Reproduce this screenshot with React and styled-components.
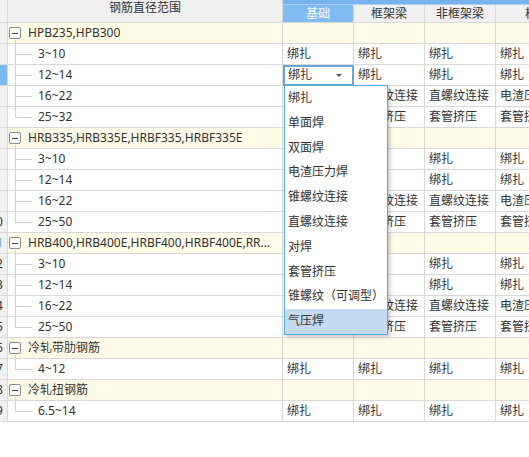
import React from 'react';
import styled, { createGlobalStyle, css } from 'styled-components';

const GlobalStyle = createGlobalStyle`
  html, body { margin: 0; padding: 0; background: #fff; }
  body {
    font-family: "Noto Sans", "Noto Sans CJK SC", sans-serif;
    font-size: 12px;
    color: #333;
  }
`;

const GRID = '#d9d9d9';
const LINE = '#d2d2d2';

const Viewport = styled.div`
  width: 529px;
  height: 457px;
  overflow: hidden;
  background: #fff;
`;

const Table = styled.div`
  position: relative;
  display: flex;
  flex-direction: column;
  width: max-content;
`;

const HeaderRow = styled.div`
  display: flex;
  height: 23px;
`;

const CornerCell = styled.div`
  width: 8px;
  flex-shrink: 0;
  box-sizing: border-box;
  background: #f0f0f0;
  border-right: 1px solid ${GRID};
  border-bottom: 1px solid ${GRID};
`;

const TitleHeader = styled.div`
  width: 275px;
  flex-shrink: 0;
  box-sizing: border-box;
  background: #f0f0f0;
  border-right: 1px solid ${GRID};
  border-bottom: 1px solid ${GRID};
  text-align: center;
  line-height: 15px;
  color: #333;
`;

const GroupHeader = styled.div`
  display: flex;
  flex-direction: column;
`;

const GroupBar = styled.div`
  height: 5px;
  box-sizing: border-box;
  background: #77b3ee;
  border-bottom: 1px solid #a9cff4;
`;

const SubHeaderRow = styled.div`
  display: flex;
  height: 18px;
`;

const SubHeader = styled.div`
  width: 71px;
  flex-shrink: 0;
  box-sizing: border-box;
  border-right: 1px solid ${GRID};
  border-bottom: 1px solid ${GRID};
  background: ${(p) => (p.$active ? '#80bbf2' : '#f0f0f0')};
  color: ${(p) => (p.$active ? '#fff' : '#333')};
  text-align: center;
  line-height: 17px;
  white-space: nowrap;
`;

const Row = styled.div`
  display: flex;
  height: 21px;
  background: ${(p) => (p.$group ? '#fffbe6' : '#fff')};
`;

const RowNum = styled.div`
  width: 8px;
  flex-shrink: 0;
  box-sizing: border-box;
  overflow: hidden;
  display: flex;
  justify-content: flex-end;
  background: ${(p) => (p.$selected ? '#7cb8f0' : '#f0f0f0')};
  border-right: 1px solid ${GRID};
  border-bottom: 1px solid ${GRID};
`;

const RowNumText = styled.span`
  width: 22px;
  flex-shrink: 0;
  text-align: center;
  line-height: 20px;
  color: #333;
`;

const NameCell = styled.div`
  position: relative;
  width: 275px;
  flex-shrink: 0;
  box-sizing: border-box;
  display: flex;
  align-items: center;
  padding-left: ${(p) => (p.$group ? '1px' : '30px')};
  padding-right: 6px;
  border-right: 1px solid ${GRID};
  border-bottom: 1px solid ${GRID};
  white-space: nowrap;
  overflow: hidden;

  ${(p) =>
    p.$group &&
    css`
      &::before {
        content: '';
        position: absolute;
        left: 7px;
        top: 17px;
        bottom: -1px;
        width: 1px;
        background: ${LINE};
      }
    `}

  ${(p) =>
    !p.$group &&
    css`
      &::before {
        content: '';
        position: absolute;
        left: 7px;
        top: -1px;
        ${p.$last ? 'height: calc(50% + 1px);' : 'bottom: -1px;'}
        width: 1px;
        background: ${LINE};
      }
      &::after {
        content: '';
        position: absolute;
        left: 7px;
        top: 50%;
        width: 17px;
        height: 1px;
        background: ${LINE};
      }
    `}
`;

const Toggle = styled.span`
  position: relative;
  width: 12px;
  height: 12px;
  flex-shrink: 0;
  box-sizing: border-box;
  border: 1px solid #8c8c8c;
  border-radius: 2px;
  background: #fff;
  margin-right: 7px;
  display: flex;
  align-items: center;
  justify-content: center;
  z-index: 1;

  &::after {
    content: '';
    width: 6px;
    height: 1px;
    background: #444;
  }
`;

const Label = styled.span`
  min-width: 0;
  overflow: hidden;
  text-overflow: ellipsis;
  line-height: 20px;
`;

const DataCell = styled.div`
  width: 71px;
  flex-shrink: 0;
  box-sizing: border-box;
  display: flex;
  align-items: center;
  justify-content: space-between;
  padding-left: 4px;
  border-right: 1px solid ${GRID};
  border-bottom: 1px solid ${GRID};
  line-height: 20px;
  white-space: nowrap;
  overflow: hidden;

  ${(p) =>
    p.$editing &&
    css`
      outline: 2px solid #6ba5dd;
      outline-offset: -2px;
      padding-left: 5px;
      padding-right: 11px;
      background: #fff;
    `}
`;

const Caret = styled.span`
  width: 0;
  height: 0;
  border-left: 3px solid transparent;
  border-right: 3px solid transparent;
  border-top: 3px solid #555;
`;

const Dropdown = styled.ul`
  position: absolute;
  top: 85px;
  left: 284px;
  width: 104px;
  height: 250px;
  box-sizing: border-box;
  margin: 0;
  padding: 0;
  list-style: none;
  background: #fff;
  border: 1px solid #55aadc;
  box-shadow: 2px 2px 4px rgba(0, 0, 0, 0.22);
  z-index: 5;
`;

const Option = styled.li`
  height: 24.8px;
  line-height: 23px;
  padding-left: 3px;
  white-space: nowrap;
  color: #333;
  background: ${(p) => (p.$selected ? '#c4daf1' : 'transparent')};
`;

const BIND = ['绑扎', '绑扎', '绑扎', '绑扎', '绑扎'];
const SCREW = ['直螺纹连接', '直螺纹连接', '直螺纹连接', '电渣压力焊', '电渣压力焊'];
const SLEEVE = ['套管挤压', '套管挤压', '套管挤压', '套管挤压', '套管挤压'];

const rows = [
  { n: 1, group: true, label: 'HPB235,HPB300' },
  { n: 2, label: '3~10', cells: BIND },
  { n: 3, label: '12~14', cells: BIND, editing: true },
  { n: 4, label: '16~22', cells: SCREW },
  { n: 5, label: '25~32', cells: SLEEVE, last: true },
  { n: 6, group: true, label: 'HRB335,HRB335E,HRBF335,HRBF335E' },
  { n: 7, label: '3~10', cells: BIND },
  { n: 8, label: '12~14', cells: BIND },
  { n: 9, label: '16~22', cells: SCREW },
  { n: 10, label: '25~50', cells: SLEEVE, last: true },
  { n: 11, group: true, label: 'HRB400,HRB400E,HRBF400,HRBF400E,RRB400,RRB400W' },
  { n: 12, label: '3~10', cells: BIND },
  { n: 13, label: '12~14', cells: BIND },
  { n: 14, label: '16~22', cells: SCREW },
  { n: 15, label: '25~50', cells: SLEEVE, last: true },
  { n: 16, group: true, label: '冷轧带肋钢筋' },
  { n: 17, label: '4~12', cells: BIND, last: true },
  { n: 18, group: true, label: '冷轧扭钢筋' },
  { n: 19, label: '6.5~14', cells: BIND, last: true },
];

const columns = ['基础', '框架梁', '非框架梁', '柱', '板'];

const options = [
  '绑扎',
  '单面焊',
  '双面焊',
  '电渣压力焊',
  '锥螺纹连接',
  '直螺纹连接',
  '对焊',
  '套管挤压',
  '锥螺纹（可调型）',
  '气压焊',
];

export default function App() {
  return (
    <>
      <GlobalStyle />
      <Viewport>
        <Table>
          <HeaderRow>
            <CornerCell />
            <TitleHeader>钢筋直径范围</TitleHeader>
            <GroupHeader>
              <GroupBar />
              <SubHeaderRow>
                {columns.map((c, i) => (
                  <SubHeader key={c} $active={i === 0}>
                    {c}
                  </SubHeader>
                ))}
              </SubHeaderRow>
            </GroupHeader>
          </HeaderRow>

          {rows.map((r) => (
            <Row key={r.n} $group={r.group}>
              <RowNum $selected={r.editing}>
                <RowNumText>{r.n}</RowNumText>
              </RowNum>
              <NameCell $group={r.group} $last={r.last}>
                {r.group && <Toggle />}
                <Label>{r.label}</Label>
              </NameCell>
              {columns.map((c, i) => {
                const editing = r.editing && i === 0;
                return (
                  <DataCell key={c} $editing={editing}>
                    {r.cells ? r.cells[i] : ''}
                    {editing && <Caret />}
                  </DataCell>
                );
              })}
            </Row>
          ))}

          <Dropdown>
            {options.map((o) => (
              <Option key={o} $selected={o === '气压焊'}>
                {o}
              </Option>
            ))}
          </Dropdown>
        </Table>
      </Viewport>
    </>
  );
}
